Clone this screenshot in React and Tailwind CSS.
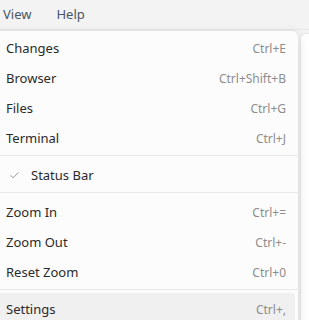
import { Check } from 'lucide-react';

const groups = [
  [
    { label: 'Changes', shortcut: 'Ctrl+E' },
    { label: 'Browser', shortcut: 'Ctrl+Shift+B' },
    { label: 'Files', shortcut: 'Ctrl+G' },
    { label: 'Terminal', shortcut: 'Ctrl+J' },
  ],
  [{ label: 'Status Bar', checked: true }],
  [
    { label: 'Zoom In', shortcut: 'Ctrl+=' },
    { label: 'Zoom Out', shortcut: 'Ctrl+-' },
    { label: 'Reset Zoom', shortcut: 'Ctrl+0' },
  ],
  [{ label: 'Settings', shortcut: 'Ctrl+,', active: true }],
];

const MenuItem = ({ item }) => (
  <div
    className={`mx-[3px] h-[30px] pt-[3px] flex items-center justify-between pr-[9px] rounded-[4px] ${
      item.active ? 'bg-[#f0f0f0]' : ''
    }`}
  >
    <div className="flex items-center pl-[42px]">
      {item.checked && (
        <Check className="w-[11px] h-[11px] text-[#444] ml-[3px] mr-[11px]" strokeWidth={1.2} />
      )}
      <span className="text-[13px] text-[#2a2a2a]">{item.label}</span>
    </div>
    {item.shortcut && <span className="text-[12px] text-[#8d8d8d]">{item.shortcut}</span>}
  </div>
);

export default function App() {
  return (
    <div
      className="relative w-[309px] h-[320px] overflow-hidden bg-[#f3f3f3] flex flex-col"
      style={{ fontFamily: '"Noto Sans", "Open Sans", sans-serif' }}
    >
      <div className="h-[30px] shrink-0 flex items-center gap-[25px] pl-[3px] border-b border-[#e6e6e6]">
        <span className="text-[13px] text-[#4a5563]">View</span>
        <span className="text-[13px] text-[#4a5563]">Help</span>
      </div>
      <div className="flex flex-1 pt-[3px]">
        <div className="flex-1" />
        <div className="w-[9px] bg-white border-l border-t border-[#e8e8e8] rounded-tl-[6px]" />
      </div>

      <div className="absolute left-[-40px] top-[30px] w-[339px] bg-[#fcfcfc] border border-[#e3e3e3] rounded-[7px] shadow-[0_4px_12px_rgba(0,0,0,0.10)] pt-[1px] pb-[4px]">
        {groups.map((group, gi) => (
          <div key={gi}>
            {gi > 0 && <div className="my-[3px] h-px bg-[#e8e8e8]" />}
            {group.map((item) => (
              <MenuItem key={item.label} item={item} />
            ))}
          </div>
        ))}
      </div>
    </div>
  );
}
